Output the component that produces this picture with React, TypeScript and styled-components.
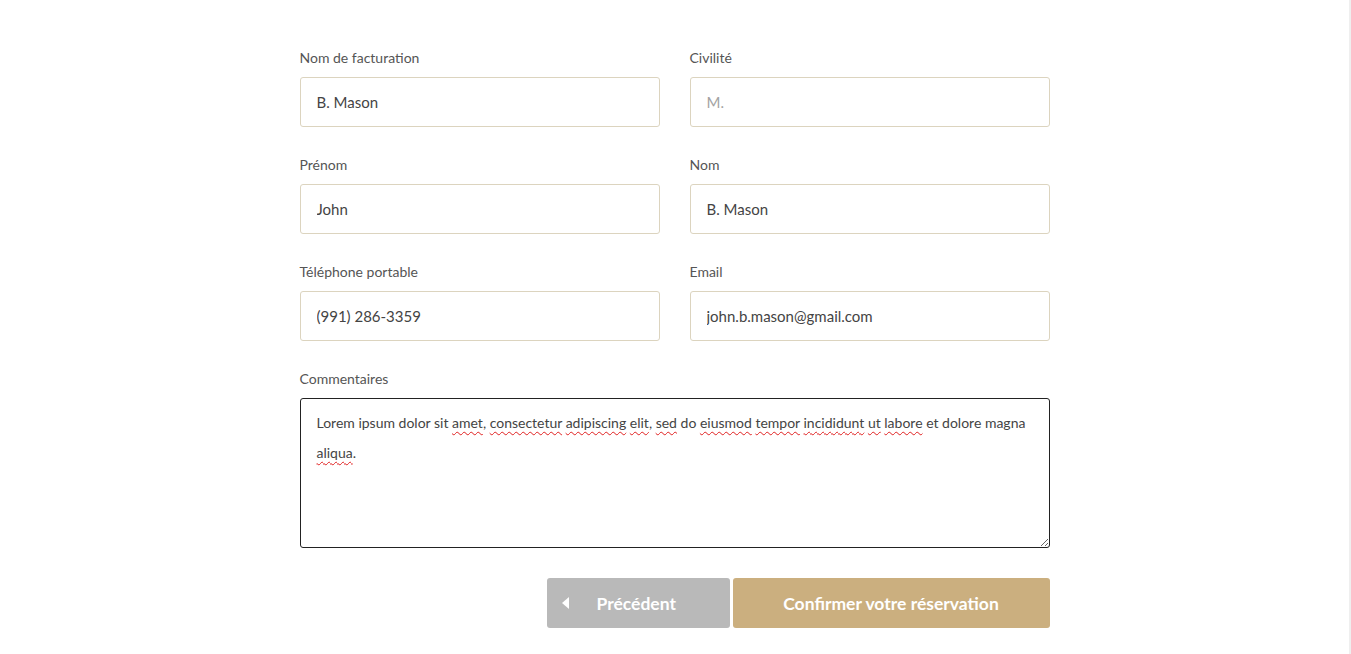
import styled, { createGlobalStyle } from "styled-components";

const GlobalStyle = createGlobalStyle`
  html, body {
    margin: 0;
    padding: 0;
    background: #fff;
  }
  body {
    font-family: Lato, "Liberation Sans", sans-serif;
    color: #444;
  }
  * {
    box-sizing: border-box;
  }
`;

const Page = styled.div`
  display: flex;
  min-height: 654px;
`;

const Main = styled.main`
  flex: 1;
  display: flex;
  justify-content: center;
  padding-top: 48px;
`;

const ScrollEdge = styled.div`
  width: 2px;
  background: #efefef;
`;

const Form = styled.form`
  width: 750px;
  display: flex;
  flex-direction: column;
`;

const Grid = styled.div`
  display: grid;
  grid-template-columns: 360px 360px;
  column-gap: 30px;
  row-gap: 28px;
`;

const Field = styled.div<{ $wide?: boolean }>`
  display: flex;
  flex-direction: column;
  grid-column: ${(p) => (p.$wide ? "1 / -1" : "auto")};
`;

const Label = styled.label`
  font-size: 14px;
  line-height: 19px;
  color: #555;
  margin-bottom: 10px;
`;

const Input = styled.input`
  height: 50px;
  border: 1px solid #dcd4bf;
  border-radius: 3px;
  padding: 0 16px;
  font-family: inherit;
  font-size: 15px;
  color: #444;
  outline: none;
  background: #fff;
  &::placeholder {
    color: #a3a3a3;
  }
`;

const TextBox = styled.div`
  height: 150px;
  border: 1px solid #222;
  border-radius: 3px;
  padding: 9px 16px;
  font-size: 14px;
  line-height: 30px;
  color: #444;
  resize: vertical;
  overflow: auto;
`;

const Typo = styled.span`
  text-decoration: underline wavy #e02020;
  text-decoration-thickness: 1px;
  text-underline-offset: 3px;
`;

const Actions = styled.div`
  display: flex;
  justify-content: flex-end;
  gap: 3px;
  margin-top: 30px;
`;

const Button = styled.button<{ $variant: "back" | "primary" }>`
  height: 50px;
  width: ${(p) => (p.$variant === "back" ? "183px" : "317px")};
  border: none;
  border-radius: 3px;
  background: ${(p) => (p.$variant === "back" ? "#b9b9b9" : "#cbaf7f")};
  color: #fff;
  font-family: Lato, "Liberation Sans", sans-serif;
  font-weight: 700;
  font-size: 17.5px;
  display: flex;
  align-items: center;
  justify-content: center;
  padding: 0;
  cursor: pointer;
`;

const BackInner = styled.span`
  width: 100%;
  display: flex;
  align-items: center;
  padding-left: 15px;
  gap: 28px;
`;

const Arrow = styled.span`
  width: 0;
  height: 0;
  border-top: 6px solid transparent;
  border-bottom: 6px solid transparent;
  border-right: 7px solid #fff;
`;

const words: [string, boolean][] = [
  ["Lorem ipsum dolor sit ", false],
  ["amet", true],
  [", ", false],
  ["consectetur", true],
  [" ", false],
  ["adipiscing", true],
  [" ", false],
  ["elit", true],
  [", ", false],
  ["sed", true],
  [" do ", false],
  ["eiusmod", true],
  [" ", false],
  ["tempor", true],
  [" ", false],
  ["incididunt", true],
  [" ", false],
  ["ut", true],
  [" ", false],
  ["labore", true],
  [" et dolore magna ", false],
  ["aliqua", true],
  [".", false],
];

const App = () => {
  return (
    <Page>
      <GlobalStyle />
      <Main>
        <Form onSubmit={(e) => e.preventDefault()}>
          <Grid>
            <Field>
              <Label>Nom de facturation</Label>
              <Input defaultValue="B. Mason" />
            </Field>
            <Field>
              <Label>Civilité</Label>
              <Input placeholder="M." />
            </Field>
            <Field>
              <Label>Prénom</Label>
              <Input defaultValue="John" />
            </Field>
            <Field>
              <Label>Nom</Label>
              <Input defaultValue="B. Mason" />
            </Field>
            <Field>
              <Label>Téléphone portable</Label>
              <Input defaultValue="(991) 286-3359" />
            </Field>
            <Field>
              <Label>Email</Label>
              <Input defaultValue="john.b.mason@gmail.com" />
            </Field>
            <Field $wide>
              <Label>Commentaires</Label>
              <TextBox role="textbox">
                {words.map(([w, typo], i) => (typo ? <Typo key={i}>{w}</Typo> : <span key={i}>{w}</span>))}
              </TextBox>
            </Field>
          </Grid>
          <Actions>
            <Button type="button" $variant="back">
              <BackInner>
                <Arrow />
                Précédent
              </BackInner>
            </Button>
            <Button type="submit" $variant="primary">
              Confirmer votre réservation
            </Button>
          </Actions>
        </Form>
      </Main>
      <ScrollEdge />
    </Page>
  );
};

export default App;
